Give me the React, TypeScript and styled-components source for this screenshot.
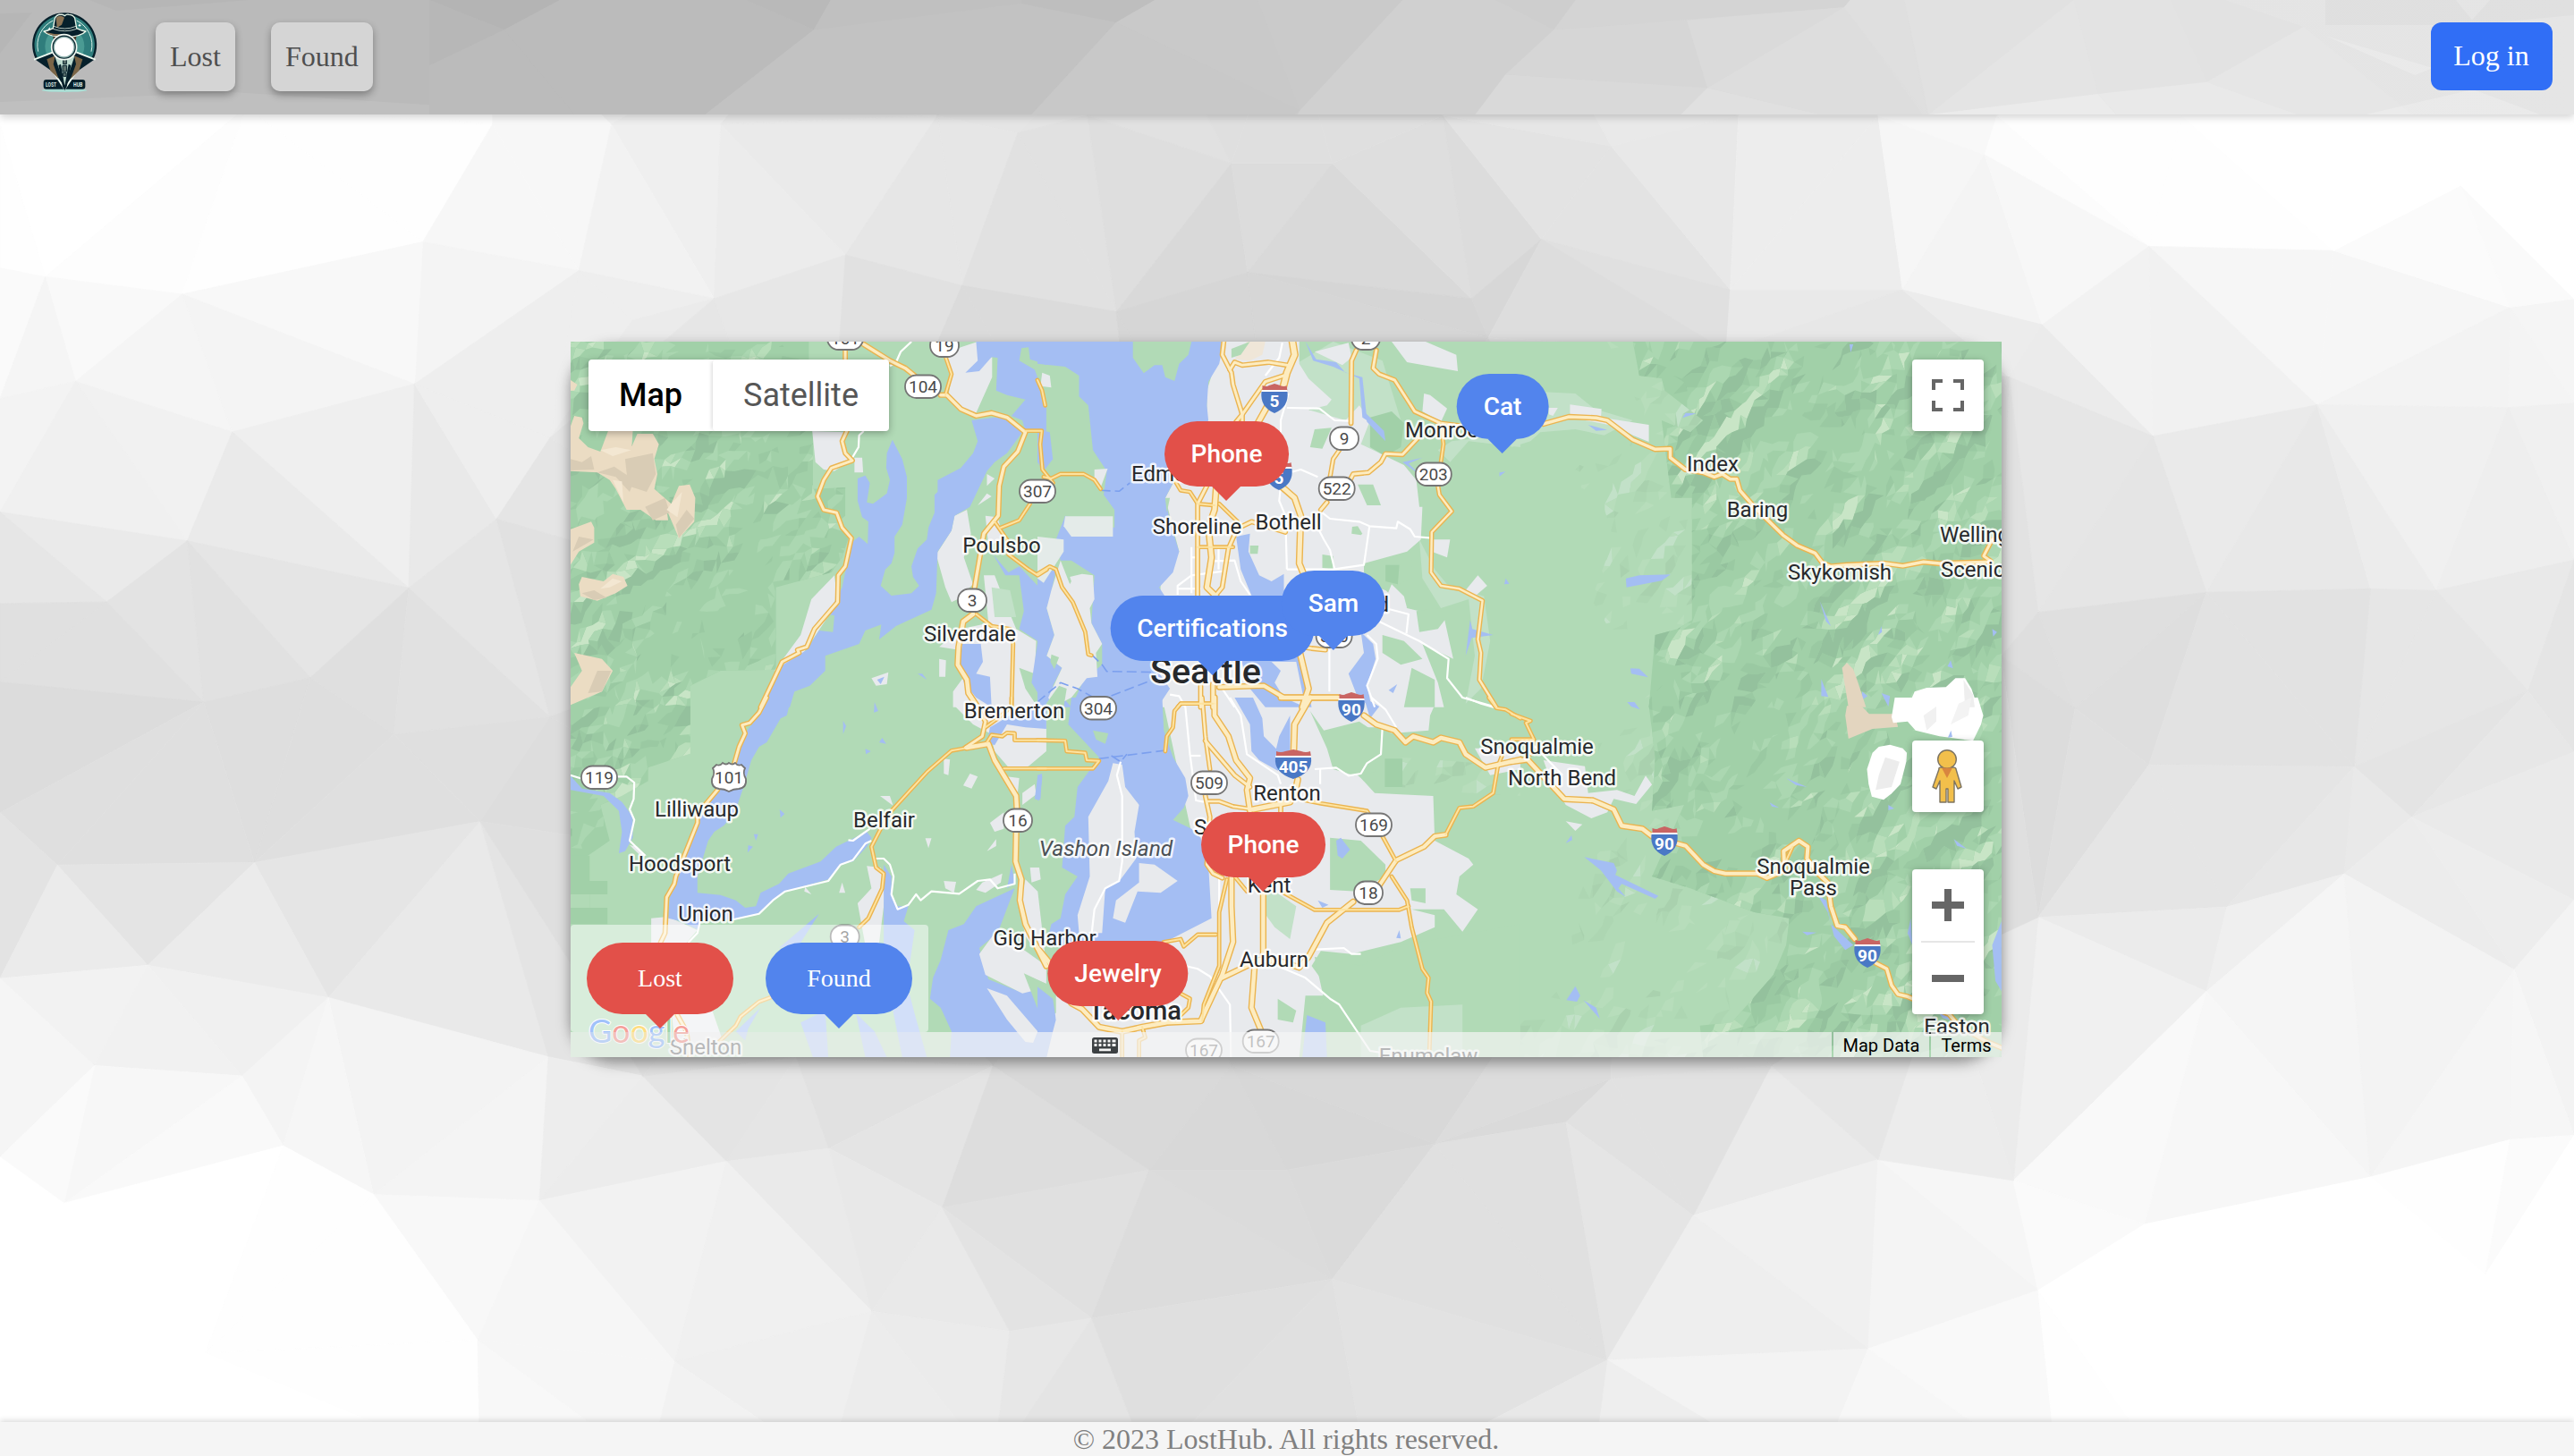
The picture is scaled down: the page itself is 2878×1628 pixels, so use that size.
import React from "react";
import styled, { createGlobalStyle } from "styled-components";

const LOST = "#e25049";
const FOUND = "#5284ed";

/* ---------- page backdrop: low-poly mesh ---------- */

type Vertex = [number, number, number];

const LEFT_MESH: Vertex[] = [
  [0, -100, 255], [0, 40, 255], [300, 20, 255], [600, 40, 252], [600, -100, 250], [745, 40, 245], [878, 40, 240], [1142, 30, 232], [1240, 50, 232], [1325, 30, 228], [1000, -100, 230], [1400, -100, 220],
  [0, 205, 253], [55, 215, 249], [222, 235, 250], [515, 175, 250], [705, 208, 242], [870, 240, 236], [770, 265, 237], [1030, 190, 232], [1172, 225, 226], [1360, 255, 216], [1520, 210, 213], [1500, 85, 224],
  [0, 355, 246], [92, 335, 245], [283, 393, 243], [505, 338, 242], [0, 485, 240], [228, 518, 231], [605, 493, 234], [130, 588, 228], [498, 572, 228], [670, 400, 234],
  [0, 590, 224], [0, 680, 222], [248, 703, 220], [378, 675, 223], [480, 740, 222], [670, 720, 224], [585, 840, 222], [310, 887, 224], [70, 890, 224], [0, 830, 222],
  [180, 1005, 238], [0, 1020, 240], [400, 1042, 241], [668, 1110, 238], [115, 1120, 244], [295, 1132, 244], [345, 1212, 250], [0, 1225, 251], [78, 1278, 254], [455, 1268, 250], [657, 1275, 245],
  [885, 1230, 236], [783, 1132, 228], [970, 1110, 224], [1010, 1215, 230], [1148, 1283, 229], [1210, 1120, 220], [1400, 1240, 218], [1500, 1120, 215], [582, 1435, 251], [822, 1460, 243], [1062, 1402, 237],
  [1330, 1410, 224], [1230, 1425, 231], [0, 1460, 255], [250, 1450, 255], [585, 1580, 250], [790, 1580, 244], [1010, 1580, 239], [1210, 1580, 233], [1400, 1580, 226], [0, 1600, 255], [1000, 600, 220], [1400, 600, 214], [1000, 900, 218], [1400, 900, 214],
];

const RIGHT_MESH: Vertex[] = [
  [55, 85, 221], [190, 30, 228], [225, 240, 214], [310, 172, 220], [395, 65, 234], [550, 30, 238], [540, 230, 229], [245, 285, 215], [535, 300, 226], [750, 230, 240], [720, 30, 244], [850, 75, 250], [865, 30, 252],
  [1050, 180, 250], [920, 270, 241], [1275, 185, 250], [1090, 30, 255], [1490, 250, 247], [1568, 240, 248], [1255, 362, 241], [1055, 398, 234], [880, 330, 230], [1488, 365, 241], [1568, 360, 242],
  [1120, 577, 226], [915, 600, 228], [1320, 573, 230], [1400, 575, 236], [1568, 540, 235], [1512, 690, 226], [960, 710, 217], [870, 650, 219], [1050, 775, 223], [1300, 777, 226], [915, 950, 227], [1145, 938, 233],
  [1288, 900, 238], [1120, 1035, 242], [1370, 835, 235], [1568, 760, 228], [1495, 1010, 239], [1568, 930, 240], [885, 1252, 250], [720, 1228, 239], [1320, 1248, 251], [1490, 1205, 249], [1045, 1302, 253], [340, 1185, 221],
  [395, 1135, 220], [590, 1120, 225], [180, 1210, 218], [495, 1292, 233], [0, 1240, 217], [55, 1365, 222], [390, 1458, 235], [708, 1445, 245], [915, 1378, 250], [940, 1600, 251], [1080, 1600, 255], [1460, 1360, 255],
  [640, 1600, 244], [370, 1600, 238], [100, 1600, 226], [1568, 1200, 249], [1568, 1600, 255], [1568, 30, 255], [1568, -100, 255], [1090, -100, 254], [700, -100, 242], [300, -100, 228], [0, -100, 222],
  [800, 1000, 224], [400, 600, 220], [400, 900, 220], [0, 600, 214], [1430, 110, 255],
];

const MESH: Vertex[] = [
  ...LEFT_MESH.map(([x, y, g]): Vertex => [x / 1.0896, 100 + y / 1.0262, g]),
  ...RIGHT_MESH.map(([x, y, g]): Vertex => [1439 + x / 1.0896, 100 + y / 1.0262, g]),
];

function random(seed: number) {
  let s = seed;
  return () => {
    s = (s * 1664525 + 1013904223) % 4294967296;
    return s / 4294967296;
  };
}

function triangulate(v: Vertex[]): number[][] {
  const pts: number[][] = [...v, [-9000, -9000], [12000, -9000], [1400, 18000]];
  const n = v.length;
  let tris: number[][] = [[n, n + 1, n + 2]];
  const inside = (t: number[], p: number[]) => {
    const [a, b, c] = t.map((i) => pts[i]);
    const d = 2 * (a[0] * (b[1] - c[1]) + b[0] * (c[1] - a[1]) + c[0] * (a[1] - b[1]));
    if (Math.abs(d) < 1e-6) return true;
    const sq = (q: number[]) => q[0] * q[0] + q[1] * q[1];
    const ux = (sq(a) * (b[1] - c[1]) + sq(b) * (c[1] - a[1]) + sq(c) * (a[1] - b[1])) / d;
    const uy = (sq(a) * (c[0] - b[0]) + sq(b) * (a[0] - c[0]) + sq(c) * (b[0] - a[0])) / d;
    return (p[0] - ux) ** 2 + (p[1] - uy) ** 2 < (a[0] - ux) ** 2 + (a[1] - uy) ** 2;
  };
  for (let i = 0; i < n; i++) {
    const bad = tris.filter((t) => inside(t, pts[i]));
    const edges = new Map<string, number[]>();
    bad.forEach((t) => {
      [[t[0], t[1]], [t[1], t[2]], [t[2], t[0]]].forEach((e) => {
        const key = [...e].sort((a, b) => a - b).join("-");
        if (edges.has(key)) edges.delete(key);
        else edges.set(key, e);
      });
    });
    tris = tris.filter((t) => !bad.includes(t));
    edges.forEach((e) => tris.push([e[0], e[1], i]));
  }
  return tris.filter((t) => t.every((i) => i < n));
}

const FACETS = (() => {
  const rnd = random(11);
  return triangulate(MESH).map((t) => {
    const avg = t.reduce((s, i) => s + MESH[i][2], 0) / 3;
    const g = Math.min(255, Math.round(avg + (avg > 251 ? 2 : (rnd() - 0.5) * 3)));
    return { points: t.map((i) => `${MESH[i][0].toFixed(1)},${MESH[i][1].toFixed(1)}`).join(" "), fill: `rgb(${g},${g},${g})` };
  });
})();

const HEADER_FACETS: [string, string][] = [
  ["#b4b4b4", "0,0 108,0 62,100"], ["#b7b7b7", "0,0 62,100 0,220"], ["#bbbbbb", "0,220 62,100 120,384 0,384"], ["#bbbbbb", "108,0 262,0 318,100 228,384 120,384 62,100"],
  ["#b9b9b9", "262,0 332,0 318,100"], ["#c0c0c0", "332,0 600,0 568,75 490,12 318,100"], ["#c2c2c2", "318,100 490,12 568,75 498,384 228,384"], ["#bebebe", "490,0 600,0 568,75 490,12"],
  ["#c9c9c9", "568,75 600,0 685,0 720,370"], ["#cacaca", "685,0 805,0 720,370"], ["#c8c8c8", "568,75 720,370 715,384 498,384"], ["#d0d0d0", "805,0 882,0 930,100 890,250 865,384 718,384 720,370"],
  ["#cecece", "882,0 948,0 930,100"], ["#d4d4d4", "948,0 1175,0 1170,25 930,100"], ["#d6d6d6", "930,100 1040,68 1057,295 890,250"], ["#d9d9d9", "890,250 1057,295 1035,384 865,384"],
  ["#dadada", "1040,68 1170,25 1057,295"], ["#e0e0e0", "1057,295 1150,384 1035,384"], ["#dddddd", "1170,25 1235,384 1150,384 1057,295"], ["#dfdfdf", "1175,0 1220,0 1238,384 1170,25"],
  ["#e1e1e1", "1220,0 1360,0 1240,384"], ["#e4e4e4", "1360,0 1380,315 1240,384"], ["#ebebeb", "1380,315 1395,384 1240,384"], ["#e3e3e3", "1360,0 1440,0 1470,275 1380,315"],
  ["#e9e9e9", "1380,315 1470,275 1545,384 1395,384"], ["#e2e2e2", "1440,0 1485,0 1550,90 1470,275"], ["#e6e6e6", "1470,275 1550,90 1640,384 1545,384"],
];

/* ---------- map geometry, drawn sheet by sheet ---------- */

type Sheet = "A" | "B" | "C" | "D" | "E" | "F";
const SHEETS: Record<Sheet, [number, number, number]> = {
  A: [-8, -12, 2.904], B: [522, -12, 2.904], C: [1052, -12, 2.8],
  D: [-8, 398, 2.904], E: [522, 398, 2.904], F: [1052, 398, 2.8],
};

const place = (sheet: Sheet, coords: string) => {
  const [ox, oy, sx] = SHEETS[sheet];
  return coords.trim().split(/\s+/).map((p) => {
    const [x, y] = p.split(",").map(Number);
    return `${(ox + x / sx).toFixed(1)},${(oy + y / 3).toFixed(1)}`;
  }).join(" ");
};

const LAND = "#b1dab6", FOREST = "#a1d0a8", SHADE = "#94c19d", MEADOW = "#c2e1c8", GLINT = "#c8e5c6";
const URBAN = "#e8eaed", WATER = "#a4bef3", ROCK = "#ebdcc3", ROCK_SHADE = "#d9ccb5";

type Area = [Sheet, string, string];

const MOUNTAINS: [Sheet, string][] = [
  ["A", "23,36 797,36 797,120 810,300 810,530 915,525 915,620 870,660 930,680 905,760 870,810 690,860 690,1136 510,1140 412,1190 412,1262 23,1262"],
  ["D", "23,28 412,28 412,188 275,235 275,280 190,330 120,360 150,480 23,570"],
  ["C", "380,36 1534,36 1534,1262 430,1262 450,1020 520,1000 565,970 565,560 500,560 470,300 560,340 600,300 480,200 470,160 400,150"],
  ["F", "430,28 1534,28 1534,1206 600,1206 590,1100 690,1090 820,930 860,830 870,740 760,720 560,640 440,600 540,360 440,380 450,200"],
];
const FOOTHILLS: [Sheet, string][] = [
  ["C", "300,36 480,36 620,300 600,1262 320,1262 330,1040 250,900 320,700 280,560 170,500 240,420 360,400 420,300 340,120"],
  ["F", "320,28 500,28 640,500 900,800 700,1206 0,1206 0,850 150,560 60,540 180,430 240,200"],
  ["D", "23,260 120,360 180,480 60,560 23,560"],
  ["E", "1180,200 1568,230 1568,330 1400,320 1180,300"],
];

const UNDER: Area[] = [
  ["B", MEADOW, "840,110 960,36 1120,100 1180,300 1130,430 950,380 850,200"],
  ["B", MEADOW, "1300,400 1345,370 1500,350 1568,350 1568,390 1400,370 1340,440"],
  ["B", MEADOW, "1240,700 1290,800 1330,850 1450,890 1470,1040 1440,1200 1390,1250 1420,1090 1400,900 1310,930 1250,830"],
  ["B", URBAN, "600,36 850,36 850,110 880,160 955,230 940,250 880,265 1000,300 1045,250 1080,300 1050,380 1130,420 1190,450 1230,500 1240,590 1250,590 1245,700 1200,740 1060,780 1060,810 1200,930 1320,960 1350,1100 1250,1050 1300,1180 1320,1262 390,1262 400,850 460,740 415,560 550,300 550,200"],
  ["B", URBAN, "900,70 1010,40 1020,90 990,115"], ["B", URBAN, "1150,36 1260,36 1360,80 1365,135 1200,105"],
  ["B", URBAN, "1280,700 1340,700 1330,760 1280,740"], ["B", URBAN, "1430,820 1460,855 1420,890 1390,870"], ["B", URBAN, "1255,210 1275,215 1330,260 1310,305 1250,270"],
  ["E", URBAN, "405,0 1300,0 1275,60 1270,110 1150,120 1120,100 980,100 940,170 1050,270 1095,320 1180,325 1285,330 1290,480 1400,540 1415,560 1370,600 1360,660 1430,710 1380,785 1320,710 1215,710 1290,730 1290,770 1180,820 1020,860 920,850 890,900 960,1000 870,1000 850,1206 0,1206 0,1100 100,1030 340,830 560,740"],
  ["E", URBAN, "1420,170 1500,170 1568,180 1568,240 1470,260"],
  ["E", LAND, "885,45 930,110 1045,80 1130,140 1100,190 1095,250 1030,262 960,240 940,170"],
  ["E", LAND, "950,470 1050,480 1130,560 1130,600 1040,650 950,645"],
  ["E", MEADOW, "730,620 840,700 820,810 770,770 735,720"], ["E", LAND, "900,870 1050,900 1190,830 1568,760 1568,1206 860,1206 930,1010"],
  ["E", MEADOW, "1050,1100 1180,1040 1380,1030 1380,1206 1050,1206"], ["E", LAND, "780,1010 840,1050 830,1090 780,1080"], ["E", LAND, "1210,640 1260,640 1260,690 1215,680"],
  ["E", FOREST, "1128,205 1185,205 1185,300 1128,300"],
  ["B", LAND, "1040,655 1055,680 1050,685 1020,680 1022,657"], ["B", LAND, "690,720 718,720 715,748 690,748"], ["B", LAND, "925,750 960,755 960,800 925,795"],
  ["B", LAND, "900,330 955,325 925,395 885,390"], ["B", LAND, "1040,515 1090,515 1115,585 1070,585"], ["B", FOREST, "1080,290 1150,270 1190,310 1180,390 1130,420 1080,390"],
  ["B", LAND, "1060,790 1130,770 1215,740 1215,830 1130,870 1070,850"], ["B", FOREST, "1130,785 1175,785 1170,850 1130,840"],
  ["B", URBAN, "1150,850 1190,890 1200,930 1130,900"], ["B", LAND, "1230,940 1300,930 1330,960 1300,1000 1240,1010"], ["B", LAND, "1120,1020 1190,1040 1250,1100 1180,1120 1120,1080"], ["B", LAND, "1215,1130 1290,1170 1290,1262 1190,1262"],
  ["B", "#efe6d8", "680,36 740,36 730,80 690,100 640,95"], ["B", LAND, "630,60 690,36 660,80 630,90"],
  ["A", URBAN, "808,336 915,340 905,400 938,430 880,470 845,465 818,440"], ["A", URBAN, "945,425 970,425 973,475 945,475"],
  ["A", URBAN, "880,820 890,910 800,1050 765,1100 685,1140 770,1020 805,900"],
  ["A", URBAN, "1310,600 1323,680 1300,760 1330,850 1280,900 1260,910 1240,860 1210,750 1260,670 1270,620"],
  ["A", URBAN, "1245,85 1290,55 1345,36 1350,105 1392,88 1392,155 1340,275 1290,260 1250,215 1262,145"],
  ["A", URBAN, "1365,820 1400,820 1430,900 1470,1000 1535,1040 1530,1150 1480,1130 1500,1200 1540,1262 1265,1262 1265,1210 1300,1160 1285,1070 1220,1060 1290,1000 1380,980"],
  ["A", URBAN, "1375,480 1400,495 1375,520"], ["A", URBAN, "1375,545 1390,555 1345,585"], ["A", URBAN, "1000,1165 1055,1145 1050,1185 1015,1190"], ["A", URBAN, "1220,1100 1242,1105 1240,1160 1220,1160"],
  ["A", URBAN, "1370,620 1410,625 1430,700 1380,720"], ["A", MEADOW, "1390,860 1450,870 1470,960 1400,960"],
  ["D", URBAN, "1270,28 1340,28 1568,28 1568,180 1510,230 1450,240 1400,180 1385,120 1330,90"],
  ["D", URBAN, "985,565 1030,570 1045,640 1040,700 1025,822 980,830 955,690 1000,640"], ["D", URBAN, "285,740 340,735 435,780 400,822 285,822"],
  ["D", URBAN, "1235,205 1255,208 1250,260 1235,255"], ["D", URBAN, "1320,255 1345,265 1325,305 1298,295"], ["D", URBAN, "1385,420 1430,385 1430,440 1400,450"],
  ["D", URBAN, "1500,610 1540,650 1568,900 1500,800 1480,700"], ["D", URBAN, "1515,570 1545,570 1550,610 1520,620"], ["D", URBAN, "1028,330 1060,330 1070,362"],
  ["D", URBAN, "1235,615 1275,618 1268,655 1240,640"], ["D", URBAN, "1360,620 1425,590 1420,620 1370,655 1340,645"],
  ["D", URBAN, "1440,265 1480,270 1475,320"], ["D", URBAN, "1490,320 1530,290 1535,325 1490,360"], ["D", URBAN, "215,495 240,500 270,530 250,530"],
  ["D", URBAN, "1175,472 1195,472 1185,505"], ["D", URBAN, "1405,475 1405,498 1375,515"], ["D", URBAN, "905,620 915,655 895,655"], ["D", URBAN, "785,635 805,660 782,650"],
  ["D", FOREST, "23,530 85,530 85,615 143,615 143,660 85,660 85,705 143,705 143,760 23,760"], ["D", LAND, "23,660 85,660 85,705 23,705"],
  ["D", "#e9ebee", "350,1040 480,1040 520,1160 400,1206 360,1150"],
  ["C", MEADOW, "100,205 200,210 260,262 380,300 290,350 200,330 90,340 60,370 0,390 0,250"],
  ["C", URBAN, "183,247 282,262 280,290 430,315 430,372 380,350 330,320 183,290"], ["C", URBAN, "117,258 145,258 130,285 117,280"],
  ["F", URBAN, "100,210 230,230 240,320 330,310 385,330 420,262 440,292 390,357 320,340 300,385 250,405 170,360 120,270"], ["F", URBAN, "170,415 222,425 200,447"],
];

const WATERS: Area[] = [
  ["A", WATER, "1325,300 1400,290 1440,295 1490,340 1440,410 1400,440 1375,470 1320,590 1270,620 1260,670 1215,740 1210,880 1195,935 1080,990 1025,1035 1032,985 980,1005 960,1050 850,1090 850,1140 800,1190 750,1210 735,1262 640,1262 705,1125 790,1070 830,1005 875,1010 880,955 855,950 885,900 905,860 935,710 960,690 988,715 990,640 970,625 955,570 955,495 980,485 995,510 985,575 1005,580 1050,545 1060,500 1048,460 1050,410 1068,365 1100,430 1115,490 1115,560 1100,650 1075,690 1075,745 1065,780 1045,800 1030,855 1065,888 1130,880 1155,855 1135,825 1130,790 1150,730 1180,700 1185,660 1205,610 1205,550 1215,540 1215,500 1290,460 1330,410 1345,370"],
  ["A", WATER, "1340,36 1568,36 1568,115 1545,105 1515,95 1510,55 1487,58 1480,100 1530,130 1548,180 1550,215 1568,230 1568,335 1500,335 1490,300 1455,285 1500,230 1440,215 1405,200 1410,90 1390,88 1350,135 1305,140 1345,100"],
  ["A", WATER, "1295,1050 1355,1050 1362,1110 1340,1150 1385,1160 1390,1262 1340,1230 1300,1180 1285,1120"],
  ["A", WATER, "1395,750 1445,810 1480,790 1545,860 1568,830 1568,1262 1520,1180 1540,1040 1480,1000 1495,940 1480,820 1435,820"],
  ["A", WATER, "1018,1170 1042,1160 1030,1185"], ["A", WATER, "1150,1150 1165,1150 1180,1170"],
  ["B", WATER, "0,36 605,36 590,110 555,170 550,250 555,300 445,500 415,560 430,640 460,740 440,810 395,860 420,900 530,905 540,1090 370,1110 430,1200 390,1262 110,1262 150,1170 210,1120 210,1050 175,980 185,820 110,770 75,770 60,700 90,620 250,660 250,600 215,550 225,470 180,400 165,250 135,220 135,150 90,120 0,110"],
  ["B", WATER, "0,330 40,340 50,430 20,470 0,440"], ["B", WATER, "0,820 60,800 40,900 30,930 55,1020 30,1090 80,1130 50,1190 110,1262 0,1262"],
  ["B", "#e4ebe9", "90,622 245,622 245,690 110,690 85,655"], ["B", "#e4ebe9", "0,690 85,700 85,740 20,845 0,830"],
  ["B", URBAN, "75,770 105,850 110,840 105,825 145,815 180,820 185,900 170,930 175,980 210,1050 190,1080 195,1160 160,1165 110,1230 50,1262 35,1230 80,1130 30,1090 55,1020 30,930 45,870"],
  ["B", LAND, "310,36 500,36 490,80 460,110 445,168 415,155 405,115 380,115 345,142 310,90"], ["B", LAND, "70,1190 95,1200 85,1262 20,1262"], ["B", LAND, "45,1085 70,1095 55,1135 42,1110"],
  ["B", URBAN, "185,465 228,462 205,525 185,500"], ["B", URBAN, "15,140 40,150 45,190 10,185"], ["B", LAND, "415,560 430,560 420,610"],
  ["B", WATER, "645,690 690,680 685,740 720,820 760,840 800,815 800,900 860,1105 890,1262 740,1262 690,1200 660,1100 700,900 660,800"],
  ["B", URBAN, "760,1110 840,1110 870,1262 800,1230 770,1180 790,1140"], ["B", WATER, "1050,1010 1090,1050 1098,1100 1070,1190 1085,1262 1040,1230 1010,1150 1060,1080"],
  ["B", WATER, "870,36 905,95 970,105 1000,140 1055,155 1070,300 1055,290 1045,160 960,120 895,100"], ["B", WATER, "1060,270 1125,335 1130,370 1070,305"], ["B", WATER, "1185,440 1250,425 1205,445 1245,485"],
  ["B", WATER, "1520,830 1532,848 1516,850"], ["B", WATER, "1500,475 1520,472 1500,488"], ["B", WATER, "1140,1205 1168,1185 1155,1215"], ["B", WATER, "1405,970 1412,1000 1480,1020 1410,1030 1390,1090"],
  ["D", WATER, "665,0 740,0 725,60 705,70 660,150 635,165 610,210 585,300 555,390 520,430 490,450 470,480 435,600 435,655 510,662 560,680 590,705 625,700 640,655 700,625 730,590 835,550 885,500 985,450 1000,470 985,500 940,550 900,560 860,610 720,650 630,725 560,745 445,740 440,780 380,750 340,740 345,670 365,620 435,420 500,310 560,210 590,120 640,50"],
  ["D", WATER, "23,262 60,305 150,320 190,350 225,400 225,470 200,515 180,522 190,450 180,380 130,330 23,310"],
  ["D", WATER, "1040,560 1065,600 1065,660 1085,700 1120,700 1105,750 1140,780 1115,960 1140,1060 1180,1206 1100,1206 1060,1000 1040,822"],
  ["D", WATER, "1465,640 1340,700 1300,760 1250,780 1225,880 1200,940 1190,1010 1225,1040 1260,1120 1255,1206 1568,1206 1568,1040 1540,1040 1500,930 1490,990 1380,945 1350,840 1410,790 1450,680"],
  ["D", URBAN, "1400,790 1500,850 1568,900 1568,960 1500,930 1520,985 1490,992 1370,930 1350,860"], ["D", URBAN, "1375,975 1440,1000 1540,1120 1525,1158 1500,1155 1440,1080"], ["D", LAND, "1495,925 1568,960 1568,1040 1540,1045"],
  ["D", WATER, "1375,150 1385,100 1450,60 1480,50 1568,0 1568,105 1500,100 1440,90 1400,160"], ["D", WATER, "1540,260 1555,265 1545,345 1530,340"], ["D", WATER, "1455,560 1465,620 1440,640"],
  ["D", WATER, "702,375 718,390 705,403"], ["D", WATER, "618,458 632,458 625,480"], ["D", WATER, "600,495 615,500 598,520"], ["D", WATER, "980,172 998,180 982,190"], ["D", WATER, "1035,135 1048,155 1025,150"], ["D", WATER, "1010,15 1022,45 1008,50"], ["D", WATER, "908,78 918,95 908,122"], ["D", WATER, "700,840 830,725 770,822"],
  ["D", WATER, "560,1120 640,1040 600,1110 590,1150"], ["D", WATER, "770,1090 850,1050 860,1206 810,1206"], ["D", WATER, "950,1060 1010,1120 1050,1206 980,1206"],
  ["E", WATER, "110,0 405,0 410,110 440,200 480,270 490,330 475,370 440,410 500,440 530,470 555,560 565,740 415,820 200,860 100,830 45,830 35,800 45,760 75,740 90,660 130,600 80,570 90,430 120,400 130,300 200,200 100,90"],
  ["E", URBAN, "245,220 275,225 285,300 330,360 315,450 320,540 270,610 220,640 210,790 135,790 130,730 170,600 165,400 230,280"], ["E", URBAN, "330,555 380,560 455,615 400,655 325,650 285,755 245,740 255,680 330,620"],
  ["E", LAND, "180,110 230,120 220,155 190,140"], ["E", WATER, "0,970 50,1010 60,1080 50,1120 30,1206 0,1206"], ["E", URBAN, "60,1000 160,1040 160,1080 60,1080"],
  ["E", WATER, "640,0 700,0 730,70 735,130 775,172 785,130 820,60 820,200 780,245 720,210 695,180 690,90"], ["E", WATER, "970,480 985,470 1015,510 990,540 975,530"], ["E", WATER, "1060,0 1110,30 1080,70"], ["E", WATER, "910,680 945,695 925,705"],
  ["E", WATER, "875,1065 935,1090 940,1206 860,1206"], ["E", WATER, "0,260 15,255 10,340 0,345"], ["E", WATER, "1175,780 1180,808 1165,806"],
  ["C", WATER, "358,830 400,820 498,817 470,838 360,860"], ["C", WATER, "545,275 578,277 535,292"], ["C", WATER, "1058,45 1070,45 1062,72"], ["C", WATER, "965,905 1000,990 985,975"], ["C", WATER, "1158,990 1160,1010 1148,1020"], ["C", WATER, "970,1168 992,1228 970,1225"], ["C", WATER, "372,1132 400,1133 428,1162 375,1150"], ["C", WATER, "1505,1000 1520,1010 1508,1025"], ["C", WATER, "1375,1105 1382,1132 1365,1125"], ["C", WATER, "1158,1215 1185,1225 1180,1260"], ["C", WATER, "1098,1210 1115,1225 1095,1240"], ["C", WATER, "240,315 300,332 265,335"],
  ["F", WATER, "228,535 320,555 330,580 325,595 460,665 450,675 345,625 335,640 357,668 330,650 280,580"], ["F", WATER, "960,665 985,680 1000,760 1070,830 1045,847 1010,800 990,720"], ["F", WATER, "1534,750 1505,830 1515,950 1534,985"], ["F", WATER, "1250,740 1240,790 1255,830"],
  ["F", WATER, "200,968 215,1000 205,1020 172,1015"], ["F", WATER, "225,1015 265,1040 277,1078"], ["F", WATER, "910,785 955,788 925,797"], ["F", WATER, "808,352 838,370 815,365"], ["F", WATER, "860,270 925,300 890,293"], ["F", WATER, "1385,475 1425,507 1395,497"], ["F", WATER, "362,15 385,15 402,40 375,30"], ["F", WATER, "188,462 190,478 170,488"], ["F", WATER, "1180,360 1198,372 1180,378"], ["F", WATER, "1340,1062 1380,1062 1400,1090 1350,1075"],
];

const ROCKS: Area[] = [
  ["A", ROCK, "23,320 35,285 60,290 65,310 50,360 80,390 120,405 145,336 225,336 222,388 240,345 290,345 310,380 295,430 305,480 295,530 350,580 375,520 410,515 428,560 425,640 375,695 335,600 340,635 300,635 250,600 205,600 170,530 150,500 110,475 23,470"],
  ["A", ROCK, "23,665 90,640 100,660 100,710 50,740 23,785"], ["A", ROCK, "50,850 60,825 130,840 160,815 195,825 208,855 170,880 110,905 55,890"],
  ["A", ROCK, "35,1080 125,1100 160,1140 125,1210 23,1255 23,1195 60,1140"], ["A", ROCK, "23,165 45,180 35,200 23,200"],
  ["C", "#e3d5bf", "1035,1130 1050,1113 1070,1135 1085,1180 1110,1262 1055,1262"], ["F", "#e3d5bf", "1050,28 1095,28 1120,55 1200,55 1210,98 1130,105 1055,138 1045,60"],
];
const ROCK_FOLDS: Area[] = [
  ["A", ROCK_SHADE, "110,475 165,455 230,500 215,540 170,490"], ["A", ROCK_SHADE, "200,430 290,410 300,480 270,540 210,520"], ["A", ROCK_SHADE, "23,430 60,440 90,420 100,465 23,468"], ["A", ROCK_SHADE, "265,590 330,560 345,610 290,635"], ["A", ROCK_SHADE, "365,650 400,600 425,630 375,695"], ["A", "#f3e7d2", "160,500 190,505 195,575"], ["A", "#f3e7d2", "350,580 385,540 370,625 335,600"], ["A", "#f3e7d2", "120,400 170,390 220,400 160,420"], ["A", ROCK_SHADE, "30,740 50,690 98,700"], ["A", ROCK_SHADE, "60,880 100,870 140,895 100,903"], ["A", "#f3e7d2", "120,865 160,830 190,840 150,860"], ["A", ROCK_SHADE, "80,1215 110,1140 155,1140 125,1210"],
];
const SNOW: Area[] = [
  ["C", "#fff", "1205,1235 1250,1240 1262,1210 1300,1197 1360,1195 1390,1165 1420,1165 1440,1200 1460,1262 1215,1262"],
  ["F", "#fff", "1200,0 1460,0 1477,60 1470,90 1445,145 1340,130 1265,110 1240,80 1195,85 1190,65"],
  ["F", "#fff", "1130,185 1150,165 1185,158 1225,170 1238,185 1236,215 1218,290 1190,322 1165,343 1128,332 1118,290 1113,240"],
  ["F", "#ececec", "1170,200 1215,215 1190,300 1140,310 1150,260"], ["C", "#eeeeee", "1415,1170 1445,1220 1450,1262 1420,1262"], ["F", "#f1f1f1", "1290,60 1330,30 1330,80 1300,110"], ["F", "#f3f3f3", "1400,20 1440,0 1430,60 1375,90"], ["F", WATER, "1376,110 1380,132 1366,134"],
];

type Road = [Sheet, number, string];
const ROADS: Road[] = [
  ["A", 5, "915,60 915,96"], ["A", 5, "920,336 905,370 915,410 938,435 870,460 845,500 825,555 845,600 887,610 905,660 935,695 915,790 892,820 890,910 815,1000 790,1060 760,1070 765,1080 710,1110 640,1262"],
  ["A", 5.5, "975,45 1060,100 1110,125 1140,150"], ["A", 5.5, "1225,215 1245,215 1290,262 1340,285 1390,275 1440,290 1500,340 1475,405 1430,455 1415,520 1412,620 1365,680 1335,860"],
  ["A", 6.5, "1330,950 1298,975 1283,1060 1280,1120 1310,1170 1315,1215 1345,1262"], ["A", 4, "1240,85 1260,145 1240,215"], ["A", 4, "1500,335 1553,335 1548,380 1555,465 1590,510"],
  ["B", 4, "20,490 45,495 75,480 150,480 185,500 205,530"], ["A", 4, "1515,580 1480,635 1420,660"], ["A", 4, "1400,640 1440,700 1445,750 1510,800 1540,820 1570,800"],
  ["B", 4, "0,815 40,790 60,800 80,860 115,910 155,1010 165,1085 175,1088"], ["A", 4, "1340,950 1390,990 1450,1000 1460,1050 1455,1262"], ["B", 4, "0,165 15,200 25,250"],
  ["D", 5, "660,0 635,50 605,85 580,92 590,120 570,165 555,220"], ["D", 5, "500,310 435,390 435,420 365,600 360,625 335,670 330,790 315,822 370,1065 400,1120 410,1206"],
  ["D", 4, "1380,155 1330,165 1260,178 1180,250 1065,380 1030,440 1000,500 1015,570 1040,590 1035,640 990,740 960,770"], ["D", 4, "675,1005 635,1020 575,1070 560,1100 505,1155"],
  ["D", 6.5, "1310,168 1380,155 1400,210 1470,330 1472,370"], ["D", 6.5, "1470,450 1468,550 1487,610 1482,680 1500,760 1568,900"], ["D", 5, "1305,168 1360,130 1370,80 1325,0"], ["D", 4, "1370,100 1410,70 1455,30 1455,0"],
  ["D", 4, "1375,150 1390,125 1425,130 1440,118 1465,120 1465,143 1568,143"], ["E", 4, "0,143 90,145 95,180 155,185 160,210 200,212 180,238 0,238"], ["D", 4, "1430,238 1568,238"],
  ["E", 6.5, "0,840 40,890 110,1025 145,1045 200,1105 275,1120 340,1105 420,1090 530,1085 550,1040 600,930 635,820 630,700 630,600"],
  ["E", 6.5, "575,0 575,60 620,130 645,210 690,270 680,310 690,380"], ["E", 4, "615,610 590,720 590,900 540,1030 535,1085"], ["E", 4.5, "535,0 545,130 560,240"], ["E", 5, "545,330 560,400 550,560 570,590 600,605"], ["E", 5, "545,145 640,260 690,300"],
  ["E", 7, "885,0 835,90 832,180"], ["E", 7, "845,275 840,300 820,350 700,375"], ["E", 4.5, "700,375 635,365 590,348 555,348"], ["E", 5, "790,355 790,385"], ["E", 6.5, "733,640 733,880 705,900 695,1040 725,1115"],
  ["E", 6.5, "1025,685 940,755 880,870 850,905 790,885 720,880 600,940"], ["E", 6, "1110,630 1165,545 1255,500 1290,465 1325,460"], ["E", 4, "1325,460 1370,370 1415,365 1480,320 1495,230 1510,190"],
  ["E", 4, "870,345 920,355 1070,380 1120,465 1165,550"], ["E", 4, "1150,600 1200,680 1215,770 1250,910 1270,940 1265,990 1278,1020 1272,1206"], ["E", 4, "640,600 680,650"], ["E", 4, "800,655 900,712 1175,712 1205,700"],
  ["E", 4, "410,820 465,810 475,835 520,795 580,795"], ["E", 4, "415,180 420,130 440,100 445,45 465,20 575,20"], ["E", 4, "460,990 495,1010 490,1040 460,1070"], ["E", 4, "275,1120 275,1206"], ["E", 4, "340,1105 350,1140 330,1150 330,1206"],
  ["E", 6.5, "790,0 975,0"], ["E", 6.5, "1060,60 1100,90 1160,110 1195,150 1220,130 1285,150 1310,135 1370,150 1390,190 1455,235 1568,208"],
  ["F", 6.5, "0,215 50,208 165,340 255,345 320,375 345,430 410,440 440,465"], ["F", 6, "520,490 545,497 600,560 635,582 670,590 770,590 800,605 855,580 852,515 900,480 928,500 925,540 960,590 990,620 1000,700 1020,765 1045,770 1075,810"], ["F", 4, "850,570 880,500"],
  ["F", 5.5, "1140,890 1175,910 1190,965 1210,995 1240,1003 1370,1062 1400,1100 1480,1150 1534,1175"], ["F", 4, "0,55 60,78 45,85 70,140 60,190"], ["F", 4, "0,140 70,140"],
  ["B", 5, "605,36 600,80 630,140 635,180 665,280 665,310"], ["B", 8, "828,36 835,80 810,140 795,200"], ["B", 5, "625,130 640,105 665,115 750,105 810,115"], ["B", 5, "800,150 740,170 665,280 645,305"], ["B", 7, "745,255 715,310"],
  ["B", 5, "550,520 520,580 520,890"], ["B", 7, "580,530 575,600 555,660 565,760 550,860 580,890"], ["B", 5, "650,660 620,730 600,860 580,885"], ["B", 4, "445,500 465,535 495,540 520,580 575,585"], ["B", 4, "590,580 650,640"], ["B", 5, "655,660 695,640 805,675"], ["B", 4, "520,725 635,725"],
  ["B", 7, "785,515 835,560 855,620 850,780 870,830"], ["B", 7, "850,1070 880,1200 860,1262"], ["B", 5, "1035,65 1020,100 1018,310"], ["B", 4.5, "980,400 960,430 950,490"],
  ["B", 5, "1100,65 1090,125 1110,145 1160,165 1225,270 1310,310 1400,322 1568,310"], ["B", 5, "1235,360 1185,415 1130,412 1115,440 1075,475 1025,480 1015,500"], ["B", 5, "940,575 920,600"], ["B", 4, "1310,310 1318,380 1310,440"],
  ["B", 4.5, "1300,520 1305,550 1345,605 1280,675 1278,810 1310,855 1370,865 1445,905 1430,1035 1440,1080 1435,1170 1490,1262"], ["E", 4, "1465,0 1490,35 1520,40 1568,70"],
  ["B", 5, "530,1180 530,1262"], ["B", 6, "570,1185 570,1262"], ["B", 6, "590,1195 735,1190 800,1230 980,1230"], ["B", 5, "860,1060 890,1065 935,1070"], ["B", 4, "455,1262 465,1250 570,1250"],
  ["C", 5.5, "100,312 180,288 265,292 300,300 380,365 450,397 497,395 497,425 545,465 600,475 635,490 660,480 685,497 705,497 715,535 760,590 850,685 895,720 950,745 975,780 1000,790 1050,785 1170,780 1225,788 1290,775 1340,780 1500,775"], ["C", 5, "1505,700 1478,755 1500,772"],
];

const LANES: [Sheet, string][] = [
  ["A", "1130,36 1095,70 1080,105 1060,118"], ["A", "975,336 960,350 958,390 935,430"], ["D", "23,260 60,272"], ["D", "175,265 205,265 230,285 228,340 215,375 230,410 215,480 265,530"],
  ["D", "1000,480 980,490 940,545 900,560 860,615 720,650 680,680 635,725 550,745"], ["D", "995,440 940,480 925,478"], ["D", "1010,540 1040,540 1060,560 1072,600 1065,660 1085,710 1120,695 1145,660 1160,680 1195,650 1285,658 1345,615 1385,610 1410,640 1465,625 1465,590"], ["D", "445,745 435,790 405,822"],
  ["E", "480,30 495,190 515,345 540,350"], ["E", "495,195 530,195"], ["E", "625,0 660,60 680,190 780,260 790,290"], ["E", "900,240 970,235 1010,262 1050,255 1070,220 1115,190 1120,100"], ["E", "270,215 258,260 275,330 275,550 265,615 220,640 185,710 175,800"],
  ["E", "780,900 870,940 950,1010 980,1030 1080,1185 1110,1190"], ["E", "905,845 995,840 1020,860 1050,860"], ["E", "480,900 520,910 560,935 625,1030 628,1206"], ["E", "590,600 590,720"], ["E", "1085,0 1130,40 1165,100"], ["E", "918,240 918,290"], ["E", "1390,0 1440,20 1490,35"], ["F", "60,150 160,260"],
  ["B", "795,40 785,90 740,150"], ["B", "815,210 790,300 790,340"], ["B", "810,258 915,260 965,300 1015,302"], ["B", "820,475 855,465 910,490"], ["B", "790,520 785,570 805,620 810,800"], ["B", "905,650 930,700 950,735 965,800"], ["B", "810,800 960,800 1060,785 1078,655"],
  ["B", "925,610 950,630 1045,640 1078,655 1165,662 1170,640 1210,665 1225,690 1280,695"], ["B", "500,725 500,880"], ["B", "500,760 525,760"], ["B", "588,725 588,800"], ["B", "575,772 640,770 660,840 690,885"], ["B", "610,805 500,820 455,855 455,885"], ["B", "455,865 530,865"],
  ["B", "948,1070 948,1210"], ["B", "1070,1020 1100,1050 1105,1100 1070,1190 1095,1262"], ["B", "1110,975 1180,1010 1240,1040 1335,1100 1330,1165 1380,1230 1490,1262"], ["B", "1130,930 1205,950 1198,1015"], ["B", "430,1220 460,1225 480,1262"], ["B", "600,1200 640,1262"],
];
const FERRIES: [Sheet, string][] = [
  ["B", "205,535 265,538 300,510"], ["B", "175,1085 210,1120 225,1142 400,1145"], ["B", "0,1245 75,1180 130,1200 200,1240 370,1172"], ["E", "200,205 410,178"], ["E", "240,195 270,215 290,190"],
];

/* Hill shading: a jittered grid over a ridged height field, each facet toned by its slope. */
const lattice = (x: number, y: number) => {
  const n = Math.sin(x * 127.1 + y * 311.7) * 43758.5453;
  return n - Math.floor(n);
};
const noise = (x: number, y: number) => {
  const xi = Math.floor(x), yi = Math.floor(y);
  const fx = x - xi, fy = y - yi;
  const sx = fx * fx * (3 - 2 * fx), sy = fy * fy * (3 - 2 * fy);
  const top = lattice(xi, yi) * (1 - sx) + lattice(xi + 1, yi) * sx;
  const low = lattice(xi, yi + 1) * (1 - sx) + lattice(xi + 1, yi + 1) * sx;
  return top * (1 - sy) + low * sy;
};
const ridge = (x: number, y: number) => 1 - Math.abs(2 * noise(x, y) - 1);

function relief(seed: number, [bx, by, bw, bh]: number[], step: number, angle: number, tones: [number, number, string][]) {
  const c = Math.cos(angle), s = Math.sin(angle);
  const height = (x: number, y: number) => {
    const u = x * c + y * s + seed, v = -x * s + y * c + seed;
    return 34 * ridge(u / 74, v / 40) + 15 * ridge(u / 34 + 9, v / 19) + 5 * noise(u / 12, v / 9);
  };
  const cols = Math.ceil(bw / step) + 1, rows = Math.ceil(bh / step) + 1;
  const node = (i: number, j: number) => {
    const x = bx + (i + (lattice(i + seed, j) - 0.5) * 0.85 + (j % 2) * 0.5) * step;
    const y = by + (j + (lattice(i, j + seed) - 0.5) * 0.85) * step;
    return [x, y, height(x, y)];
  };
  const paths = new Map<string, string>();
  const add = (p: number[], q: number[], r: number[]) => {
    const ax = q[0] - p[0], ay = q[1] - p[1], az = q[2] - p[2];
    const dx = r[0] - p[0], dy = r[1] - p[1], dz = r[2] - p[2];
    const nz = ax * dy - ay * dx || 1;
    const gx = (az * dy - ay * dz) / nz, gy = (ax * dz - az * dx) / nz;
    const light = gx * 0.62 + gy * 0.78;
    const tone = tones.find(([lo, hi]) => light >= lo && light < hi);
    if (!tone) return;
    const d = `M${[p, q, r].map((k) => `${k[0].toFixed(1)} ${k[1].toFixed(1)}`).join("L")}Z`;
    paths.set(tone[2], (paths.get(tone[2]) ?? "") + d);
  };
  for (let j = 0; j < rows; j++) {
    for (let i = -1; i < cols; i++) {
      const p = node(i, j), q = node(i + 1, j), r = node(i, j + 1), t = node(i + 1, j + 1);
      if (j % 2) { add(p, q, t); add(p, t, r); } else { add(p, q, r); add(q, t, r); }
    }
  }
  return [...paths.entries()];
}
const MOUNTAIN_TONES: [number, number, string][] = [[-99, -0.85, SHADE], [-0.85, -0.5, "#9ac9a2"], [0.45, 0.95, "#abd7b1"], [0.95, 1.35, "#b8deba"], [1.35, 99, GLINT]];
const HILL_TONES: [number, number, string][] = [[-99, -1.2, "#a9d1ae"], [-1.2, -0.9, "#add6b2"], [0.8, 1.3, "#b7ddbb"], [1.3, 99, MEADOW]];
const WEST_RELIEF = relief(3, [0, 0, 330, 560], 9.5, -0.55, MOUNTAIN_TONES);
const EAST_RELIEF = relief(17, [1170, 0, 430, 800], 9.5, -0.85, MOUNTAIN_TONES);
const HILL_RELIEF = relief(29, [900, 0, 560, 800], 10.5, -0.9, HILL_TONES);

type Label = { t: string; x: number; y: number; size?: number; weight?: number; anchor?: "start" | "end"; italic?: boolean };
const LABELS: Label[] = [
  { t: "Poulsbo", x: 1120, y: 618 }, { t: "Silverdale", x: 1084.5, y: 717 }, { t: "Bremerton", x: 1134, y: 803 }, { t: "Lilliwaup", x: 779, y: 913 }, { t: "Hoodsport", x: 760, y: 973.5 }, { t: "Union", x: 789, y: 1029.5 },
  { t: "Belfair", x: 988.5, y: 925 }, { t: "Gig Harbor", x: 1168, y: 1056.5 }, { t: "Shelton", x: 789, y: 1179 }, { t: "Vashon Island", x: 1236.5, y: 956.5, size: 24.5, italic: true }, { t: "Renton", x: 1439, y: 894.5 }, { t: "Kent", x: 1419, y: 998 },
  { t: "Auburn", x: 1424.5, y: 1081 }, { t: "Tacoma", x: 1269, y: 1140, size: 29, weight: 500 }, { t: "Enumclaw", x: 1597, y: 1189 }, { t: "Seattle", x: 1348, y: 764, size: 39.5, weight: 500 }, { t: "Shoreline", x: 1338.5, y: 597 }, { t: "Bothell", x: 1440.5, y: 592 },
  { t: "Edmonds", x: 1265, y: 538, anchor: "start" }, { t: "Monroe", x: 1571, y: 489, anchor: "start" }, { t: "Redmond", x: 1553, y: 684, anchor: "end" }, { t: "SeaTac", x: 1335, y: 933, anchor: "start" }, { t: "Index", x: 1915, y: 527 }, { t: "Baring", x: 1965, y: 577.5 },
  { t: "Skykomish", x: 2057, y: 648 }, { t: "Wellington", x: 2169, y: 605.5, anchor: "start" }, { t: "Scenic", x: 2170, y: 645, anchor: "start" }, { t: "Snoqualmie", x: 1718.5, y: 842.5 }, { t: "North Bend", x: 1746.5, y: 877.5 },
  { t: "Snoqualmie", x: 2027.5, y: 976.5 }, { t: "Pass", x: 2027.5, y: 1001 }, { t: "Easton", x: 2188, y: 1155.5 },
];
const ROUTES: [string, number, number][] = [
  ["101", 945, 378], ["19", 1056, 386], ["104", 1032, 432], ["307", 1160, 549], ["3", 1087, 671], ["119", 670, 869], ["16", 1138, 917], ["3", 944.7, 1047], ["304", 1228, 791.5], ["509", 1352, 875], ["169", 1536, 922],
  ["18", 1530, 998], ["167", 1409.7, 1164], ["167", 1346, 1174], ["9", 1503, 490], ["522", 1494.7, 546], ["203", 1602.8, 530], ["2", 1527, 378], ["520", 1491.6, 711],
];
const INTERSTATES: [string, number, number][] = [["5", 1425, 446], ["5", 1430, 532], ["405", 1446, 855], ["90", 1511, 791], ["90", 1861, 941], ["90", 2088, 1066]];

const MapArt = () => (
  <MapSvg viewBox="0 0 1600 800">
    <defs>
      <clipPath id="mountains">{MOUNTAINS.map(([s, p], i) => <polygon key={i} points={place(s, p)} />)}</clipPath>
      <clipPath id="foothills">{FOOTHILLS.map(([s, p], i) => <polygon key={i} points={place(s, p)} />)}</clipPath>
    </defs>
    <rect width="1600" height="800" fill={LAND} />
    <g clipPath="url(#foothills)">{HILL_RELIEF.map(([fill, d]) => <path key={fill} d={d} fill={fill} />)}</g>
    {MOUNTAINS.map(([s, p], i) => <polygon key={i} points={place(s, p)} fill={FOREST} />)}
    <g clipPath="url(#mountains)">{[...WEST_RELIEF, ...EAST_RELIEF].map(([fill, d], i) => <path key={i} d={d} fill={fill} />)}</g>
    {[...UNDER, ...WATERS, ...ROCKS, ...ROCK_FOLDS, ...SNOW].map(([s, fill, p], i) => <polygon key={i} points={place(s, p)} fill={fill} />)}
    <g fill="none" strokeLinejoin="round">
      {FERRIES.map(([s, p], i) => <polyline key={i} points={place(s, p)} stroke="#7b9fee" strokeWidth="1.6" strokeDasharray="11 5" />)}
      {LANES.map(([s, p], i) => <polyline key={i} points={place(s, p)} stroke="#fff" strokeWidth="2.2" />)}
      {ROADS.map(([s, w, p], i) => <polyline key={i} points={place(s, p)} stroke="#ebb44f" strokeWidth={w + 0.8} strokeLinecap="round" />)}
      {ROADS.map(([s, w, p], i) => <polyline key={i} points={place(s, p)} stroke={w > 4.2 ? "#fdecc0" : "#fde3a0"} strokeWidth={w - 2} strokeLinecap="round" />)}
    </g>
    <g transform="translate(-638 -382)" fontFamily='Roboto, "Liberation Sans", sans-serif' textAnchor="middle">
      {ROUTES.map(([n, x, y], i) => {
        const w = n.length === 3 ? 40 : 32;
        return (
          <g key={i}>
            <rect x={x - w / 2} y={y - 12.5} width={w} height={25.5} rx="12.5" fill="#fff" stroke="#757575" strokeWidth="1.8" />
            <text x={x} y={y + 7} fontSize="19" fill="#4a4a4a">{n}</text>
          </g>
        );
      })}
      <path d="M801 855q4 2 7-2 4 3 7 0 4 3 7 0 3 4 7 2l4 4q-3 5 1 12 1 10-8 11-6 0-11 3-5-3-11-3-9-1-8-11 4-7 1-12z" fill="#fff" stroke="#757575" strokeWidth="1.8" />
      <text x="815" y="876" fontSize="19" fill="#4a4a4a">101</text>
      {INTERSTATES.map(([n, x, y], i) => {
        const w = n.length === 3 ? 20 : 14.5;
        return (
          <g key={i} transform={`translate(${x} ${y})`}>
            <path d={`M${-w + 1} -15q5 2 ${w / 2} 0q${w / 4} -1 ${w / 2 - 1} -2q${w / 4} 1 ${w / 2 - 1} 2q5 2 ${w / 2} 0l1 6h${-2 * w + 1}z`} fill="#c96563" />
            <rect x={-w} y="-10" width={w * 2} height="2.5" fill="#fff" />
            <path d={`M${-w} -8H${w}q2 17 ${-w} 24q${-w - 2} -7 ${-w} -24z`} fill="#4a78c5" />
            <text y="8.5" fontSize="19" fontWeight="700" fill="#fff">{n}</text>
          </g>
        );
      })}
      {LABELS.map((l, i) => (
        <text key={i} x={l.x} y={l.y} fontSize={l.size ?? 24} fontWeight={l.weight ?? 400} fontStyle={l.italic ? "italic" : "normal"} textAnchor={l.anchor ?? "middle"}
          fill={l.italic ? "#4b5156" : "#27292c"} stroke="#fff" strokeOpacity="0.85" strokeWidth="5" strokeLinejoin="round" paintOrder="stroke">{l.t}</text>
      ))}
      <text x="658" y="1166" fontFamily="Lato, sans-serif" fontSize="36" textAnchor="start" stroke="#fff" strokeWidth="2" paintOrder="stroke">
        <tspan fill="#4285f4">G</tspan><tspan fill="#ea4335">o</tspan><tspan fill="#fbbc05">o</tspan><tspan fill="#4285f4">g</tspan><tspan fill="#34a853">l</tspan><tspan fill="#ea4335">e</tspan>
      </text>
    </g>
  </MapSvg>
);

/* ---------- layout ---------- */

const GlobalStyle = createGlobalStyle`
  * { box-sizing: border-box; }
  body { margin: 0; background: #fff; font-family: "Liberation Serif", "Times New Roman", serif; }
`;
const Page = styled.div`
  position: relative;
  display: flex;
  flex-direction: column;
  height: 1628px;
  overflow: hidden;
`;
const Backdrop = styled.svg`
  position: absolute;
  inset: 0;
  width: 100%;
  height: 100%;
`;
const Header = styled.header`
  position: relative;
  display: flex;
  align-items: center;
  height: 128px;
  padding: 0 24px 0 36px;
  background: linear-gradient(90deg, #bababa 0%, #bababa 18%, #c4c4c4 42%, #cfcfcf 58%, #dddddd 72%, #e4e4e4 84%, #e5e5e5 100%);
  box-shadow: 0 3px 9px rgba(0, 0, 0, 0.18);
`;
const HeaderFacets = styled.svg`
  position: absolute;
  inset: 0;
  width: 100%;
  height: 100%;
`;
const Logo = styled.svg`
  position: relative;
  width: 73px;
  height: 91px;
  margin: -11px 65px 0 0;
`;
const Nav = styled.nav`
  position: relative;
  display: flex;
  flex: 1;
  gap: 40px;
  margin-top: -1px;
`;
const NavButton = styled.button`
  height: 77px;
  padding: 0 16px 1px;
  border: 0;
  border-radius: 10px;
  background: rgba(232, 232, 232, 0.6);
  box-shadow: 0 4px 8px rgba(0, 0, 0, 0.32);
  color: #4f4f4f;
  font: 32px "Liberation Serif", serif;
`;
const LoginButton = styled.button`
  position: relative;
  width: 136px;
  height: 76px;
  margin-top: -2px;
  padding: 0 1px 1px 0;
  border: 0;
  border-radius: 12px;
  background: #306ef6;
  color: #fff;
  font: 32px "Liberation Serif", serif;
`;
const Main = styled.main`
  position: relative;
  flex: 1;
  display: flex;
  justify-content: center;
  padding: 254px 2px 0 0;
`;
const MapFrame = styled.section`
  width: 1600px;
  height: 800px;
  border-radius: 48px;
  box-shadow: 0 6px 16px rgba(0, 0, 0, 0.36), 0 4px 12px rgba(0, 0, 0, 0.08);
`;
const MapCanvas = styled.div`
  position: relative;
  width: 1600px;
  height: 800px;
  overflow: hidden;
  font-family: Roboto, "Liberation Sans", sans-serif;
`;
const MapSvg = styled.svg`
  display: block;
  width: 1600px;
  height: 800px;
`;
const Overlay = styled.div`
  position: absolute;
  inset: 0;
  display: flex;
  flex-direction: column;
`;
const Controls = styled.div`
  flex: 1;
  display: flex;
  justify-content: space-between;
`;
const LeftControls = styled.div`
  display: flex;
  flex-direction: column;
  justify-content: space-between;
  padding-top: 20px;
`;
const RightControls = styled.div`
  display: flex;
  flex-direction: column;
  padding: 20px 20px 0 0;
`;
const TypeSwitch = styled.div`
  display: flex;
  width: 336px;
  height: 80px;
  margin-left: 20px;
  border-radius: 4px;
  background: #fff;
  box-shadow: 0 2px 8px rgba(0, 0, 0, 0.3);
`;
const TypeOption = styled.div<{ $active?: boolean }>`
  display: flex;
  align-items: center;
  justify-content: center;
  width: ${(p) => (p.$active ? "139px" : "197px")};
  border-radius: 4px;
  box-shadow: ${(p) => (p.$active ? "none" : "-3px 0 4px -2px rgba(0, 0, 0, 0.16)")};
  color: ${(p) => (p.$active ? "#000" : "#565656")};
  font-size: 36px;
  font-weight: ${(p) => (p.$active ? 500 : 400)};
`;
const Control = styled.div<{ $height: number; $gap: number }>`
  display: flex;
  flex-direction: column;
  align-items: center;
  justify-content: center;
  width: 80px;
  height: ${(p) => p.$height}px;
  margin-bottom: ${(p) => p.$gap}px;
  border-radius: 4px;
  background: #fff;
  box-shadow: 0 2px 8px rgba(0, 0, 0, 0.3);
`;
const ZoomHalf = styled.div`
  flex: 1;
  display: flex;
  align-items: center;
`;
const Divider = styled.div`
  width: 60px;
  height: 2px;
  background: #e6e6e6;
`;
const Legend = styled.div`
  display: flex;
  gap: 36px;
  width: 400px;
  height: 120px;
  padding: 20px 18px;
  border-radius: 4px;
  background: rgba(255, 255, 255, 0.5);
`;
const Bubble = styled.div<{ $color: string }>`
  position: relative;
  display: flex;
  align-items: center;
  justify-content: center;
  background: ${(p) => p.$color};
  color: #fff;
  white-space: nowrap;
  &::after {
    content: "";
    position: absolute;
    top: calc(100% - 0.5px);
    left: 50%;
    margin-left: -16px;
    border: 16px solid transparent;
    border-bottom-width: 0;
    border-top-color: ${(p) => p.$color};
  }
`;
const LegendBubble = styled(Bubble)`
  width: 164px;
  height: 80px;
  border-radius: 40px;
  font: 28px "Liberation Serif", serif;
`;
const Pin = styled(Bubble)<{ $x: number; $y: number }>`
  position: absolute;
  left: ${(p) => p.$x}px;
  top: ${(p) => p.$y}px;
  height: 73px;
  padding: 0 30px;
  border-radius: 36.5px;
  transform: translateX(-50%);
  font-size: 28px;
  font-weight: 500;
`;
const Attribution = styled.div`
  display: flex;
  justify-content: flex-end;
  gap: 2px;
  height: 28px;
  color: #000;
  font-size: 20px;
`;
const Strip = styled.div<{ $width?: number }>`
  flex: ${(p) => (p.$width ? `0 0 ${p.$width}px` : "1")};
  display: flex;
  align-items: center;
  justify-content: center;
  padding-top: 2px;
  background: rgba(245, 245, 245, 0.7);
`;
const KeyboardStrip = styled(Strip)`
  justify-content: flex-start;
  padding-left: 583px;
`;
const Footer = styled.footer`
  position: relative;
  display: flex;
  align-items: center;
  justify-content: center;
  height: 38px;
  padding-right: 2px;
  background: #f5f5f5;
  box-shadow: 0 -2px 6px rgba(0, 0, 0, 0.14);
  color: #808080;
  font-size: 32px;
  line-height: 38px;
`;

const PINS = [
  { text: "Phone", color: LOST, x: 733.5, y: 89 },
  { text: "Certifications", color: FOUND, x: 717.5, y: 284 },
  { text: "Sam", color: FOUND, x: 853, y: 256 },
  { text: "Cat", color: FOUND, x: 1042, y: 36 },
  { text: "Phone", color: LOST, x: 774.5, y: 526 },
  { text: "Jewelry", color: LOST, x: 612, y: 670 },
];

const DetectiveLogo = () => (
  <Logo viewBox="48 24 219 273">
    <ellipse cx="156" cy="288" rx="76" ry="6" fill="#a9dcd3" />
    <path d="M60 184A108 108 0 1 1 253 184L157 225Z" fill="#06202b" />
    <path d="M66 180A101 101 0 1 1 247 180L157 215Z" fill="#2f7d7c" />
    <circle cx="157" cy="140" r="66" fill="#4a9a93" />
    <path d="M68 158A92 92 0 0 1 118 54M246 158A92 92 0 0 0 197 54" fill="none" stroke="#d5efe6" strokeWidth="3" />
    <path d="M104 80l2-4 2 4 4 2-4 2-2 4-2-4-4-2zM205 68l2-4 2 4 4 2-4 2-2 4-2-4-4-2z" fill="#fff" />
    <rect x="86" y="252" width="140" height="32" rx="9" fill="#06202b" />
    <path d="M57 184l60-22h80l61 22-64 44-37 58-37-58z" fill="#06202b" />
    <path d="M54 185l64-25M260 185l-64-25M120 228l37 55 37-55" fill="none" stroke="#eefaf0" strokeWidth="6" strokeLinejoin="round" />
    <path d="M125 172l-28 12 12 38 28 28-18-50zM189 172l28 12-12 38-28 28 18-50z" fill="#7a6547" />
    <path d="M124 174l33 98 33-98z" fill="#bcd9cd" />
    <path d="M144 200l13 74 13-74 8 4-14 72-7 12-7-12-14-72z" fill="#06202b" />
    <path d="M152 182h11v18h-11zM150 205h14v20h-14zM152 229h10v12h-10z" fill="#5d726f" stroke="#06202b" strokeWidth="3" />
    <path d="M116 98h82l-6 32h-70z" fill="#4a3b2c" />
    <path d="M87 90q14-1 31-10l6-34q8-14 20-12 8-1 13 4 6-6 14-4 14 0 20 12l6 34q18 9 31 10-18 19-70 20-52-1-71-20z" fill="#06202b" stroke="#e9f5e8" strokeWidth="4" strokeLinejoin="round" />
    <path d="M128 44q14-12 28 0l-9 24-16 10zM92 92q30 9 62 8l-6 6q-40 0-56-14z" fill="#8a7355" />
    <path d="M120 73q37 16 75 0M118 82q40 14 79 0" fill="none" stroke="#dbe8dc" strokeWidth="2.5" />
    <circle cx="155" cy="143" r="42" fill="#06202b" stroke="#f3fbf4" strokeWidth="5" />
    <circle cx="155" cy="143" r="34" fill="#fff" stroke="#85aaa6" strokeWidth="4" />
    <text x="93" y="275" fontFamily="Roboto, sans-serif" fontWeight="700" fontSize="19" fill="#dfe9e6" textLength="36" lengthAdjust="spacingAndGlyphs">LOST</text>
    <text x="186" y="275" fontFamily="Roboto, sans-serif" fontWeight="700" fontSize="19" fill="#dfe9e6" textLength="31" lengthAdjust="spacingAndGlyphs">HUB</text>
  </Logo>
);

export default function App() {
  return (
    <>
      <GlobalStyle />
      <Page>
        <Backdrop viewBox="0 0 2878 1628" preserveAspectRatio="none">
          {FACETS.map((f, i) => <polygon key={i} points={f.points} fill={f.fill} stroke={f.fill} strokeWidth="0.8" />)}
        </Backdrop>
        <Header>
          <HeaderFacets viewBox="0 0 2878 128" preserveAspectRatio="none">
            <path d="M0 114L260 103 400 112 640 128H0z" fill="#fff" fillOpacity="0.08" />
            <path d="M100 0L130 12 280 0zM0 15L36 14 0 60z" fill="#000" fillOpacity="0.02" />
            <g transform="translate(480 0) scale(1.352 0.3334)">
              {HEADER_FACETS.map(([fill, points], i) => <polygon key={i} points={points} fill={fill} />)}
            </g>
            <path d="M2746 0h38l-20 22zM2600 28L2764 28 2878 17V0H2600z" fill="#000" fillOpacity="0.02" />
            <path d="M2645 128L2765 100 2840 128zM2600 40L2720 76 2700 84z" fill="#fff" fillOpacity="0.2" />
          </HeaderFacets>
          <DetectiveLogo />
          <Nav>
            <NavButton>Lost</NavButton>
            <NavButton>Found</NavButton>
          </Nav>
          <LoginButton>Log in</LoginButton>
        </Header>
        <Main>
          <MapFrame>
            <MapCanvas>
              <MapArt />
              {PINS.map((p, i) => (
                <Pin key={i} $color={p.color} $x={p.x} $y={p.y}>{p.text}</Pin>
              ))}
              <Overlay>
                <Controls>
                  <LeftControls>
                    <TypeSwitch>
                      <TypeOption $active>Map</TypeOption>
                      <TypeOption>Satellite</TypeOption>
                    </TypeSwitch>
                    <Legend>
                      <LegendBubble $color={LOST}>Lost</LegendBubble>
                      <LegendBubble $color={FOUND}>Found</LegendBubble>
                    </Legend>
                  </LeftControls>
                  <RightControls>
                    <Control $height={80} $gap={346}>
                      <svg width="36" height="36" viewBox="0 0 36 36" fill="none" stroke="#666" strokeWidth="4">
                        <path d="M12 2H2v10M24 2h10v10M12 34H2V24M24 34h10V24" />
                      </svg>
                    </Control>
                    <Control $height={80} $gap={64}>
                      <svg width="36" height="62" viewBox="0 0 36 62" fill="#f2bf4b" stroke="#7d7462" strokeWidth="1.4" strokeLinejoin="round">
                        <path d="M8 23q-1-2 3-2h12q4 0 4 2l6 20-4 2-4-9v24h-7V45h-2v15H9V36l-4 9-4-2z" />
                        <circle cx="17" cy="12" r="10.3" />
                        <path d="M11 21.500h12L17 33z" fill="#d8853f" stroke="none" />
                      </svg>
                    </Control>
                    <Control $height={162} $gap={0}>
                      <ZoomHalf>
                        <svg width="36" height="36" viewBox="0 0 36 36" fill="#666"><path d="M14 0h8v14h14v8H22v14h-8V22H0v-8h14z" /></svg>
                      </ZoomHalf>
                      <Divider />
                      <ZoomHalf>
                        <svg width="36" height="8" viewBox="0 0 36 8" fill="#666"><path d="M0 0h36v8H0z" /></svg>
                      </ZoomHalf>
                    </Control>
                  </RightControls>
                </Controls>
                <Attribution>
                  <KeyboardStrip>
                    <svg width="29" height="18" viewBox="0 0 29 18">
                      <rect width="29" height="18" rx="2.500" fill="#3c4043" />
                      <path d="M2.500 2.500h3v3h-3zM7.500 2.500h3v3h-3zM12.500 2.500h3v3h-3zM17.500 2.500h3v3h-3zM22.500 2.500h4v3h-4zM2.500 7h3v3h-3zM7.500 7h3v3h-3zM12.500 7h3v3h-3zM17.500 7h3v3h-3zM22.500 7h4v3h-4zM8 12.500h13v2.800H8z" fill="#f5f5f5" />
                    </svg>
                  </KeyboardStrip>
                  <Strip $width={107}>Map Data</Strip>
                  <Strip $width={79}>Terms</Strip>
                </Attribution>
              </Overlay>
            </MapCanvas>
          </MapFrame>
        </Main>
        <Footer>© 2023 LostHub. All rights reserved.</Footer>
      </Page>
    </>
  );
}
